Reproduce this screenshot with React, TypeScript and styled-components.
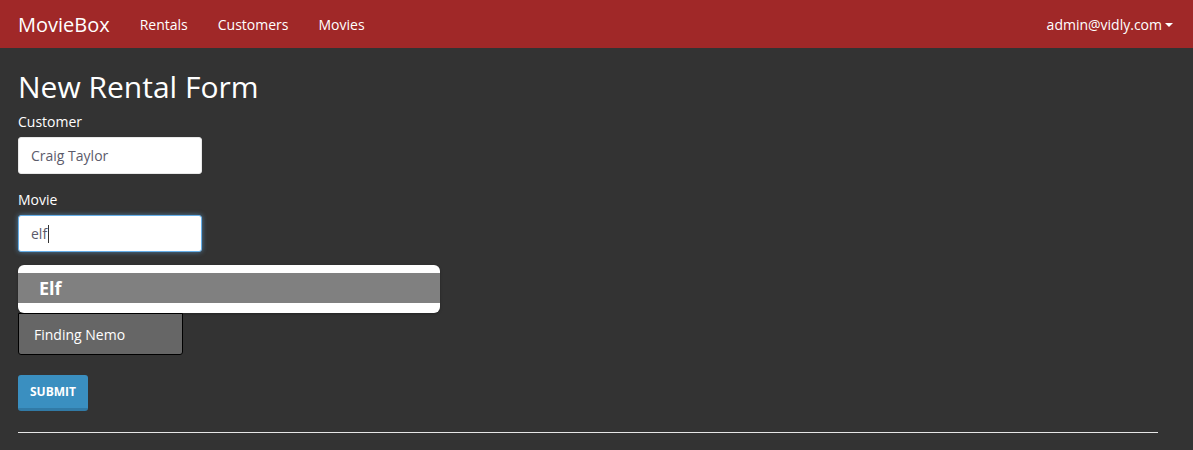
import React from "react";
import styled, { createGlobalStyle } from "styled-components";

const Global = createGlobalStyle`
  html, body { margin: 0; padding: 0; background: #333333; }
  body { font-family: "Open Sans", "Noto Sans", sans-serif; color: #ffffff; font-size: 14px; }
  * { box-sizing: border-box; }
`;

const Navbar = styled.nav`
  height: 48px;
  background: #a02828;
  display: flex;
  align-items: center;
  padding: 0 20px 0 18px;
`;

const Brand = styled.a`
  font-size: 20px;
  color: #ffffff;
  margin-right: 30px;
  text-decoration: none;
`;

const NavLinks = styled.div`
  display: flex;
  gap: 30px;
  flex: 1;
`;

const NavLink = styled.a`
  color: #ffffff;
  font-size: 14px;
  text-decoration: none;
`;

const UserMenu = styled.a`
  color: #ffffff;
  font-size: 14px;
  display: flex;
  align-items: center;
  gap: 3px;
`;

const Caret = styled.span`
  width: 0;
  height: 0;
  border-left: 4px solid transparent;
  border-right: 4px solid transparent;
  border-top: 4px solid #ffffff;
  margin-top: 2px;
`;

const Main = styled.main`
  padding: 0 35px 0 18px;
`;

const Title = styled.h2`
  font-size: 30px;
  font-weight: 400;
  line-height: 1.1;
  margin: 22px 0 9px;
`;

const Field = styled.div`
  margin-bottom: 16px;
`;

const Label = styled.label`
  display: block;
  font-size: 14px;
  line-height: 20px;
  margin-bottom: 5px;
`;

const Input = styled.div<{ $focus?: boolean }>`
  width: 184px;
  height: 37px;
  background: #ffffff;
  border-radius: 3px;
  border: 1px solid ${(p) => (p.$focus ? "#66afe9" : "#e8e8e8")};
  box-shadow: ${(p) => (p.$focus ? "0 0 5px rgba(102,175,233,0.6)" : "none")};
  color: #5b5b6b;
  padding: 0 12px;
  display: flex;
  align-items: center;
  font-size: 14px;
`;

const Cursor = styled.span`
  display: inline-block;
  width: 1px;
  height: 18px;
  background: #333;
  margin-left: 1px;
`;

const Suggestions = styled.div`
  margin-top: -3px;
`;

const ActiveList = styled.div`
  width: 422px;
  background: #ffffff;
  border-radius: 6px;
  padding: 8px 0 10px;
  box-shadow: 0 1px 3px rgba(0, 0, 0, 0.3);
`;

const ActiveItem = styled.div`
  background: #808080;
  height: 30px;
  display: flex;
  align-items: center;
  padding-left: 21px;
  font-size: 18px;
  font-weight: 700;
  color: #ffffff;
`;

const Item = styled.div`
  width: 165px;
  height: 42px;
  background: #666666;
  border: 1px solid #000000;
  border-radius: 0 0 3px 3px;
  display: flex;
  align-items: center;
  padding-left: 15px;
  font-size: 14px;
  color: #ffffff;
`;

const Button = styled.button`
  margin-top: 20px;
  width: 70px;
  height: 36px;
  background: #3a8fc0;
  border: none;
  border-bottom: 3px solid #317aa6;
  border-radius: 3px;
  color: #ffffff;
  font-family: "Open Sans", sans-serif;
  font-weight: 700;
  font-size: 12px;
  text-transform: uppercase;
  padding: 0;
`;

const Rule = styled.hr`
  margin: 21px 0 0;
  border: none;
  border-top: 1px solid #e6e6e6;
`;

export default function App() {
  return (
    <>
      <Global />
      <Navbar>
        <Brand>MovieBox</Brand>
        <NavLinks>
          <NavLink>Rentals</NavLink>
          <NavLink>Customers</NavLink>
          <NavLink>Movies</NavLink>
        </NavLinks>
        <UserMenu>
          admin@vidly.com
          <Caret />
        </UserMenu>
      </Navbar>
      <Main>
        <Title>New Rental Form</Title>
        <Field>
          <Label>Customer</Label>
          <Input>Craig Taylor</Input>
        </Field>
        <Field>
          <Label>Movie</Label>
          <Input $focus>
            elf
            <Cursor />
          </Input>
        </Field>
        <Suggestions>
          <ActiveList>
            <ActiveItem>Elf</ActiveItem>
          </ActiveList>
          <Item>Finding Nemo</Item>
        </Suggestions>
        <Button>Submit</Button>
        <Rule />
      </Main>
    </>
  );
}
